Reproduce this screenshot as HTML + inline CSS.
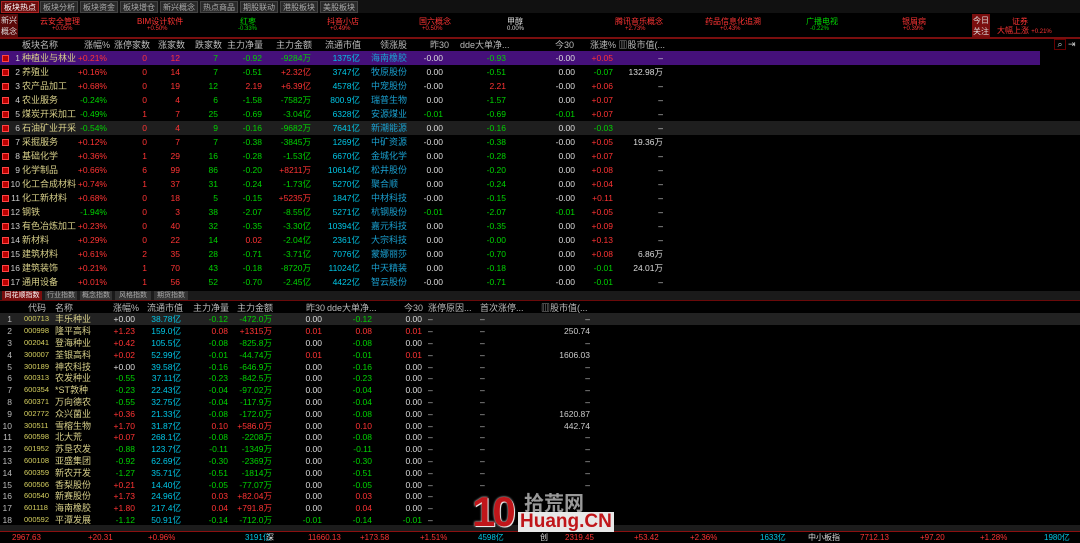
<!DOCTYPE html><html><head><meta charset="utf-8"><style>
*{margin:0;padding:0;box-sizing:border-box}
body{width:1080px;height:543px;background:#000;overflow:hidden;position:relative;font-family:"Liberation Sans","Noto Sans CJK SC",sans-serif;font-size:10px;color:#ccc}
.a{position:absolute;white-space:nowrap}
.tab{position:absolute;top:1px;height:12px;width:38px;background:#2a2a2a;color:#aaa;font-size:8px;text-align:center;line-height:12px;border:1px solid #444}
.r{position:absolute;left:0;width:1080px;height:14px;line-height:14px;font-size:8.5px}
.r span,.s span{position:absolute;text-align:right;white-space:nowrap}
.s{position:absolute;left:0;width:1080px;height:12px;line-height:12px;font-size:8.5px}
.R{color:#ff3434}.G{color:#00d400}.W{color:#ddd}.C{color:#00c8e8}.B{color:#1aa0d0}.Y{color:#d8d08a}.YY{color:#d6d060}
.u1{right:973px}.u2{right:933px}.u3{right:900px}.u4{right:862px}.u5{right:818px}.u6{right:769px}.u7{right:720px}.u9{right:637px}.u10{right:574px}.u11{right:505px}.u12{right:467px}.u13{right:417px}
.r .n{left:8px;color:#ccc;font-size:8.5px;width:12px;text-align:right}
.r .nm{left:22px;text-align:left;font-size:9px;color:#d8d08a}
.r .ld{left:371px;text-align:left;font-size:9px;color:#1aa0d0}
.r .ic{left:2px;top:4px;width:7px;height:7px;background:#b00;border:1px solid #f44}
.l1{right:945px}.l2{right:899px}.l3{right:852px}.l4{right:808px}.l5{right:758px}.l6{right:708px}.l7{right:658px}.l10{right:490px}
.s .n{left:0;width:12px;color:#bbb}
.s .cd{left:24px;text-align:left;color:#d6d060;font-size:7.5px}
.s .nm{left:55px;text-align:left;font-size:9px;color:#d8d08a}
.s .d1{left:428px;text-align:left}.s .d2{left:480px;text-align:left}
.h{position:absolute;color:#bbb;font-size:9px;white-space:nowrap;line-height:12px}
</style></head><body>
<div class="a" style="left:0;top:0;width:1080px;height:13px;background:#111"></div>
<div class="tab" style="left:1px;background:#6a0c0c;color:#fff;border-color:#a22">板块热点</div>
<div class="tab" style="left:40px">板块分析</div>
<div class="tab" style="left:80px">板块资金</div>
<div class="tab" style="left:120px">板块增仓</div>
<div class="tab" style="left:160px">新兴概念</div>
<div class="tab" style="left:200px">热点商品</div>
<div class="tab" style="left:240px">期股联动</div>
<div class="tab" style="left:280px">港股板块</div>
<div class="tab" style="left:320px">美股板块</div>
<div class="a" style="left:0;top:14px;width:18px;height:24px;background:#5a0a0a;color:#ddd;font-size:8px;line-height:11px;text-align:center;padding-top:1px">新兴<br>概念</div>
<div class="a" style="left:0;top:37px;width:1080px;height:2px;background:#7a0e0e"></div>
<div class="a R" style="left:40px;top:16px;font-size:8px">云安全管理</div><div class="a R" style="left:52px;top:26px;font-size:6px">+0.05%</div>
<div class="a R" style="left:137px;top:16px;font-size:8px">BIM设计软件</div><div class="a R" style="left:147px;top:26px;font-size:6px">+0.50%</div>
<div class="a G" style="left:240px;top:16px;font-size:8px">红枣</div><div class="a G" style="left:238px;top:26px;font-size:6px">-0.33%</div>
<div class="a R" style="left:327px;top:16px;font-size:8px">抖音小店</div><div class="a R" style="left:330px;top:26px;font-size:6px">+0.49%</div>
<div class="a R" style="left:419px;top:16px;font-size:8px">国六概念</div><div class="a R" style="left:422px;top:26px;font-size:6px">+0.50%</div>
<div class="a W" style="left:507px;top:16px;font-size:8px">甲醇</div><div class="a W" style="left:507px;top:26px;font-size:6px">0.00%</div>
<div class="a R" style="left:615px;top:16px;font-size:8px">腾讯音乐概念</div><div class="a R" style="left:625px;top:26px;font-size:6px">+2.73%</div>
<div class="a R" style="left:705px;top:16px;font-size:8px">药品信息化追溯</div><div class="a R" style="left:720px;top:26px;font-size:6px">+0.43%</div>
<div class="a G" style="left:806px;top:16px;font-size:8px">广播电视</div><div class="a G" style="left:810px;top:26px;font-size:6px">-0.22%</div>
<div class="a R" style="left:902px;top:16px;font-size:8px">银屑病</div><div class="a R" style="left:903px;top:26px;font-size:6px">+0.39%</div>
<div class="a" style="left:972px;top:14px;width:18px;height:24px;background:#7a0e0e;color:#ddd;font-size:8px;line-height:11px;text-align:center;padding-top:1px">今日<br>关注</div>
<div class="a R" style="left:1012px;top:16px;font-size:8px">证券</div>
<div class="a R" style="left:997px;top:25px;font-size:8px">大幅上涨 <span style="font-size:6px">+0.21%</span></div>

<div class="h" style="left:22px;top:39px">板块名称</div>
<div class="h" style="left:84px;top:39px">涨幅%</div>
<div class="h" style="left:114px;top:39px">涨停家数</div>
<div class="h" style="left:158px;top:39px">涨家数</div>
<div class="h" style="left:195px;top:39px">跌家数</div>
<div class="h" style="left:227px;top:39px">主力净量</div>
<div class="h" style="left:276px;top:39px">主力金额</div>
<div class="h" style="left:325px;top:39px">流通市值</div>
<div class="h" style="left:380px;top:39px">领涨股</div>
<div class="h" style="left:430px;top:39px">昨30</div>
<div class="h" style="left:460px;top:39px">dde大单净...</div>
<div class="h" style="left:555px;top:39px">今30</div>
<div class="h" style="left:590px;top:39px">涨速% ▥股市值(...</div>
<div class="a" style="left:1054px;top:39px;width:12px;height:11px;border:1px solid #600;color:#ccc;font-size:9px;line-height:9px;text-align:center">⌕</div>
<div class="a" style="left:1068px;top:39px;color:#ccc;font-size:9px">⇥</div>

<div class="a" style="left:0;top:51px;width:1040px;height:14px;background:#45107a"></div>
<div class="a" style="left:0;top:121px;width:1080px;height:14px;background:#1e1e1e"></div>

<div class="r" style="top:51px"><i class="a ic"></i><span class="n">1</span><span class="nm">种植业与林业</span><span class="u1 R">+0.21%</span><span class="u2 R">0</span><span class="u3 R">12</span><span class="u4 G">7</span><span class="u5 G">-0.92</span><span class="u6 G">-9284万</span><span class="u7 C">1375亿</span><span class="ld">海南橡胶</span><span class="u9 W">-0.00</span><span class="u10 G">-0.93</span><span class="u11 W">-0.00</span><span class="u12 R">+0.05</span><span class="u13 W">–</span></div>
<div class="r" style="top:65px"><i class="a ic"></i><span class="n">2</span><span class="nm">养殖业</span><span class="u1 R">+0.16%</span><span class="u2 R">0</span><span class="u3 R">14</span><span class="u4 G">7</span><span class="u5 G">-0.51</span><span class="u6 R">+2.32亿</span><span class="u7 C">3747亿</span><span class="ld">牧原股份</span><span class="u9 W">0.00</span><span class="u10 G">-0.51</span><span class="u11 W">0.00</span><span class="u12 G">-0.07</span><span class="u13 W">132.98万</span></div>
<div class="r" style="top:79px"><i class="a ic"></i><span class="n">3</span><span class="nm">农产品加工</span><span class="u1 R">+0.68%</span><span class="u2 R">0</span><span class="u3 R">19</span><span class="u4 G">12</span><span class="u5 R">2.19</span><span class="u6 R">+6.39亿</span><span class="u7 C">4578亿</span><span class="ld">中宠股份</span><span class="u9 W">-0.00</span><span class="u10 R">2.21</span><span class="u11 W">-0.00</span><span class="u12 R">+0.06</span><span class="u13 W">–</span></div>
<div class="r" style="top:93px"><i class="a ic"></i><span class="n">4</span><span class="nm">农业服务</span><span class="u1 G">-0.24%</span><span class="u2 R">0</span><span class="u3 R">4</span><span class="u4 G">6</span><span class="u5 G">-1.58</span><span class="u6 G">-7582万</span><span class="u7 C">800.9亿</span><span class="ld">瑞普生物</span><span class="u9 W">0.00</span><span class="u10 G">-1.57</span><span class="u11 W">0.00</span><span class="u12 R">+0.07</span><span class="u13 W">–</span></div>
<div class="r" style="top:107px"><i class="a ic"></i><span class="n">5</span><span class="nm">煤炭开采加工</span><span class="u1 G">-0.49%</span><span class="u2 R">1</span><span class="u3 R">7</span><span class="u4 G">25</span><span class="u5 G">-0.69</span><span class="u6 G">-3.04亿</span><span class="u7 C">6328亿</span><span class="ld">安源煤业</span><span class="u9 G">-0.01</span><span class="u10 G">-0.69</span><span class="u11 G">-0.01</span><span class="u12 R">+0.07</span><span class="u13 W">–</span></div>
<div class="r" style="top:121px"><i class="a ic"></i><span class="n">6</span><span class="nm">石油矿业开采</span><span class="u1 G">-0.54%</span><span class="u2 R">0</span><span class="u3 R">4</span><span class="u4 G">9</span><span class="u5 G">-0.16</span><span class="u6 G">-9682万</span><span class="u7 C">7641亿</span><span class="ld">新潮能源</span><span class="u9 W">0.00</span><span class="u10 G">-0.16</span><span class="u11 W">0.00</span><span class="u12 G">-0.03</span><span class="u13 W">–</span></div>
<div class="r" style="top:135px"><i class="a ic"></i><span class="n">7</span><span class="nm">采掘服务</span><span class="u1 R">+0.12%</span><span class="u2 R">0</span><span class="u3 R">7</span><span class="u4 G">7</span><span class="u5 G">-0.38</span><span class="u6 G">-3845万</span><span class="u7 C">1269亿</span><span class="ld">中矿资源</span><span class="u9 W">-0.00</span><span class="u10 G">-0.38</span><span class="u11 W">-0.00</span><span class="u12 R">+0.05</span><span class="u13 W">19.36万</span></div>
<div class="r" style="top:149px"><i class="a ic"></i><span class="n">8</span><span class="nm">基础化学</span><span class="u1 R">+0.36%</span><span class="u2 R">1</span><span class="u3 R">29</span><span class="u4 G">16</span><span class="u5 G">-0.28</span><span class="u6 G">-1.53亿</span><span class="u7 C">6670亿</span><span class="ld">金城化学</span><span class="u9 W">0.00</span><span class="u10 G">-0.28</span><span class="u11 W">0.00</span><span class="u12 R">+0.07</span><span class="u13 W">–</span></div>
<div class="r" style="top:163px"><i class="a ic"></i><span class="n">9</span><span class="nm">化学制品</span><span class="u1 R">+0.66%</span><span class="u2 R">6</span><span class="u3 R">99</span><span class="u4 G">86</span><span class="u5 G">-0.20</span><span class="u6 R">+8211万</span><span class="u7 C">10614亿</span><span class="ld">松井股份</span><span class="u9 W">0.00</span><span class="u10 G">-0.20</span><span class="u11 W">0.00</span><span class="u12 R">+0.08</span><span class="u13 W">–</span></div>
<div class="r" style="top:177px"><i class="a ic"></i><span class="n">10</span><span class="nm">化工合成材料</span><span class="u1 R">+0.74%</span><span class="u2 R">1</span><span class="u3 R">37</span><span class="u4 G">31</span><span class="u5 G">-0.24</span><span class="u6 G">-1.73亿</span><span class="u7 C">5270亿</span><span class="ld">聚合顺</span><span class="u9 W">0.00</span><span class="u10 G">-0.24</span><span class="u11 W">0.00</span><span class="u12 R">+0.04</span><span class="u13 W">–</span></div>
<div class="r" style="top:191px"><i class="a ic"></i><span class="n">11</span><span class="nm">化工新材料</span><span class="u1 R">+0.68%</span><span class="u2 R">0</span><span class="u3 R">18</span><span class="u4 G">5</span><span class="u5 G">-0.15</span><span class="u6 R">+5235万</span><span class="u7 C">1847亿</span><span class="ld">中材科技</span><span class="u9 W">-0.00</span><span class="u10 G">-0.15</span><span class="u11 W">-0.00</span><span class="u12 R">+0.11</span><span class="u13 W">–</span></div>
<div class="r" style="top:205px"><i class="a ic"></i><span class="n">12</span><span class="nm">钢铁</span><span class="u1 G">-1.94%</span><span class="u2 R">0</span><span class="u3 R">3</span><span class="u4 G">38</span><span class="u5 G">-2.07</span><span class="u6 G">-8.55亿</span><span class="u7 C">5271亿</span><span class="ld">杭钢股份</span><span class="u9 G">-0.01</span><span class="u10 G">-2.07</span><span class="u11 G">-0.01</span><span class="u12 R">+0.05</span><span class="u13 W">–</span></div>
<div class="r" style="top:219px"><i class="a ic"></i><span class="n">13</span><span class="nm">有色冶炼加工</span><span class="u1 R">+0.23%</span><span class="u2 R">0</span><span class="u3 R">40</span><span class="u4 G">32</span><span class="u5 G">-0.35</span><span class="u6 G">-3.30亿</span><span class="u7 C">10394亿</span><span class="ld">嘉元科技</span><span class="u9 W">0.00</span><span class="u10 G">-0.35</span><span class="u11 W">0.00</span><span class="u12 R">+0.09</span><span class="u13 W">–</span></div>
<div class="r" style="top:233px"><i class="a ic"></i><span class="n">14</span><span class="nm">新材料</span><span class="u1 R">+0.29%</span><span class="u2 R">0</span><span class="u3 R">22</span><span class="u4 G">14</span><span class="u5 R">0.02</span><span class="u6 G">-2.04亿</span><span class="u7 C">2361亿</span><span class="ld">大宗科技</span><span class="u9 W">0.00</span><span class="u10 G">-0.00</span><span class="u11 W">0.00</span><span class="u12 R">+0.13</span><span class="u13 W">–</span></div>
<div class="r" style="top:247px"><i class="a ic"></i><span class="n">15</span><span class="nm">建筑材料</span><span class="u1 R">+0.61%</span><span class="u2 R">2</span><span class="u3 R">35</span><span class="u4 G">28</span><span class="u5 G">-0.71</span><span class="u6 G">-3.71亿</span><span class="u7 C">7076亿</span><span class="ld">蒙娜丽莎</span><span class="u9 W">0.00</span><span class="u10 G">-0.70</span><span class="u11 W">0.00</span><span class="u12 R">+0.08</span><span class="u13 W">6.86万</span></div>
<div class="r" style="top:261px"><i class="a ic"></i><span class="n">16</span><span class="nm">建筑装饰</span><span class="u1 R">+0.21%</span><span class="u2 R">1</span><span class="u3 R">70</span><span class="u4 G">43</span><span class="u5 G">-0.18</span><span class="u6 G">-8720万</span><span class="u7 C">11024亿</span><span class="ld">中天精装</span><span class="u9 W">0.00</span><span class="u10 G">-0.18</span><span class="u11 W">0.00</span><span class="u12 G">-0.01</span><span class="u13 W">24.01万</span></div>
<div class="r" style="top:275px"><i class="a ic"></i><span class="n">17</span><span class="nm">通用设备</span><span class="u1 R">+0.01%</span><span class="u2 R">1</span><span class="u3 R">56</span><span class="u4 G">52</span><span class="u5 G">-0.70</span><span class="u6 G">-2.45亿</span><span class="u7 C">4422亿</span><span class="ld">智云股份</span><span class="u9 W">-0.00</span><span class="u10 G">-0.71</span><span class="u11 W">-0.00</span><span class="u12 G">-0.01</span><span class="u13 W">–</span></div>

<div class="a" style="left:0;top:291px;width:1080px;height:10px;background:#1a1a1a"></div>
<div class="a" style="left:0;top:300px;width:1080px;height:1px;background:#6a0a0a"></div>
<div class="a" style="left:2px;top:291px;width:40px;height:9px;background:#7a0e0e;color:#fff;font-size:7px;line-height:9px;text-align:center">同花顺指数</div>
<div class="a" style="left:45px;top:291px;width:32px;height:9px;background:#333;color:#aaa;font-size:7px;line-height:9px;text-align:center">行业指数</div>
<div class="a" style="left:80px;top:291px;width:32px;height:9px;background:#333;color:#aaa;font-size:7px;line-height:9px;text-align:center">概念指数</div>
<div class="a" style="left:115px;top:291px;width:36px;height:9px;background:#333;color:#aaa;font-size:7px;line-height:9px;text-align:center">风格指数</div>
<div class="a" style="left:154px;top:291px;width:34px;height:9px;background:#333;color:#aaa;font-size:7px;line-height:9px;text-align:center">期货指数</div>

<div class="h" style="left:28px;top:302px">代码</div>
<div class="h" style="left:55px;top:302px">名称</div>
<div class="h" style="left:113px;top:302px">涨幅%</div>
<div class="h" style="left:147px;top:302px">流通市值</div>
<div class="h" style="left:193px;top:302px">主力净量</div>
<div class="h" style="left:237px;top:302px">主力金额</div>
<div class="h" style="left:306px;top:302px">昨30</div>
<div class="h" style="left:327px;top:302px">dde大单净...</div>
<div class="h" style="left:404px;top:302px">今30</div>
<div class="h" style="left:428px;top:302px">涨停原因...</div>
<div class="h" style="left:480px;top:302px">首次涨停...</div>
<div class="h" style="left:541px;top:302px">▥股市值(...</div>
<div class="a" style="left:0;top:313px;width:1080px;height:12px;background:#222"></div>

<div class="s" style="top:313px"><span class="n">1</span><span class="cd">000713</span><span class="nm">丰乐种业</span><span class="l1 W">+0.00</span><span class="l2 C">38.78亿</span><span class="l3 G">-0.12</span><span class="l4 G">-472.0万</span><span class="l5 W">0.00</span><span class="l6 G">-0.12</span><span class="l7 W">0.00</span><span class="d1">–</span><span class="d2">–</span><span class="l10">–</span></div>
<div class="s" style="top:325px"><span class="n">2</span><span class="cd">000998</span><span class="nm">隆平高科</span><span class="l1 R">+1.23</span><span class="l2 C">159.0亿</span><span class="l3 R">0.08</span><span class="l4 R">+1315万</span><span class="l5 R">0.01</span><span class="l6 R">0.08</span><span class="l7 R">0.01</span><span class="d1">–</span><span class="d2">–</span><span class="l10">250.74</span></div>
<div class="s" style="top:337px"><span class="n">3</span><span class="cd">002041</span><span class="nm">登海种业</span><span class="l1 R">+0.42</span><span class="l2 C">105.5亿</span><span class="l3 G">-0.08</span><span class="l4 G">-825.8万</span><span class="l5 W">0.00</span><span class="l6 G">-0.08</span><span class="l7 W">0.00</span><span class="d1">–</span><span class="d2">–</span><span class="l10">–</span></div>
<div class="s" style="top:349px"><span class="n">4</span><span class="cd">300007</span><span class="nm">荃银高科</span><span class="l1 R">+0.02</span><span class="l2 C">52.99亿</span><span class="l3 G">-0.01</span><span class="l4 G">-44.74万</span><span class="l5 R">0.01</span><span class="l6 G">-0.01</span><span class="l7 R">0.01</span><span class="d1">–</span><span class="d2">–</span><span class="l10">1606.03</span></div>
<div class="s" style="top:361px"><span class="n">5</span><span class="cd">300189</span><span class="nm">神农科技</span><span class="l1 W">+0.00</span><span class="l2 C">39.58亿</span><span class="l3 G">-0.16</span><span class="l4 G">-646.9万</span><span class="l5 W">0.00</span><span class="l6 G">-0.16</span><span class="l7 W">0.00</span><span class="d1">–</span><span class="d2">–</span><span class="l10">–</span></div>
<div class="s" style="top:372px"><span class="n">6</span><span class="cd">600313</span><span class="nm">农发种业</span><span class="l1 G">-0.55</span><span class="l2 C">37.11亿</span><span class="l3 G">-0.23</span><span class="l4 G">-842.5万</span><span class="l5 W">0.00</span><span class="l6 G">-0.23</span><span class="l7 W">0.00</span><span class="d1">–</span><span class="d2">–</span><span class="l10">–</span></div>
<div class="s" style="top:384px"><span class="n">7</span><span class="cd">600354</span><span class="nm">*ST敦种</span><span class="l1 G">-0.23</span><span class="l2 C">22.43亿</span><span class="l3 G">-0.04</span><span class="l4 G">-97.02万</span><span class="l5 W">0.00</span><span class="l6 G">-0.04</span><span class="l7 W">0.00</span><span class="d1">–</span><span class="d2">–</span><span class="l10">–</span></div>
<div class="s" style="top:396px"><span class="n">8</span><span class="cd">600371</span><span class="nm">万向德农</span><span class="l1 G">-0.55</span><span class="l2 C">32.75亿</span><span class="l3 G">-0.04</span><span class="l4 G">-117.9万</span><span class="l5 W">0.00</span><span class="l6 G">-0.04</span><span class="l7 W">0.00</span><span class="d1">–</span><span class="d2">–</span><span class="l10">–</span></div>
<div class="s" style="top:408px"><span class="n">9</span><span class="cd">002772</span><span class="nm">众兴菌业</span><span class="l1 R">+0.36</span><span class="l2 C">21.33亿</span><span class="l3 G">-0.08</span><span class="l4 G">-172.0万</span><span class="l5 W">0.00</span><span class="l6 G">-0.08</span><span class="l7 W">0.00</span><span class="d1">–</span><span class="d2">–</span><span class="l10">1620.87</span></div>
<div class="s" style="top:420px"><span class="n">10</span><span class="cd">300511</span><span class="nm">雪榕生物</span><span class="l1 R">+1.70</span><span class="l2 C">31.87亿</span><span class="l3 R">0.10</span><span class="l4 R">+586.0万</span><span class="l5 W">0.00</span><span class="l6 R">0.10</span><span class="l7 W">0.00</span><span class="d1">–</span><span class="d2">–</span><span class="l10">442.74</span></div>
<div class="s" style="top:431px"><span class="n">11</span><span class="cd">600598</span><span class="nm">北大荒</span><span class="l1 R">+0.07</span><span class="l2 C">268.1亿</span><span class="l3 G">-0.08</span><span class="l4 G">-2208万</span><span class="l5 W">0.00</span><span class="l6 G">-0.08</span><span class="l7 W">0.00</span><span class="d1">–</span><span class="d2">–</span><span class="l10">–</span></div>
<div class="s" style="top:443px"><span class="n">12</span><span class="cd">601952</span><span class="nm">苏垦农发</span><span class="l1 G">-0.88</span><span class="l2 C">123.7亿</span><span class="l3 G">-0.11</span><span class="l4 G">-1349万</span><span class="l5 W">0.00</span><span class="l6 G">-0.11</span><span class="l7 W">0.00</span><span class="d1">–</span><span class="d2">–</span><span class="l10">–</span></div>
<div class="s" style="top:455px"><span class="n">13</span><span class="cd">600108</span><span class="nm">亚盛集团</span><span class="l1 G">-0.92</span><span class="l2 C">62.69亿</span><span class="l3 G">-0.30</span><span class="l4 G">-2369万</span><span class="l5 W">0.00</span><span class="l6 G">-0.30</span><span class="l7 W">0.00</span><span class="d1">–</span><span class="d2">–</span><span class="l10">–</span></div>
<div class="s" style="top:467px"><span class="n">14</span><span class="cd">600359</span><span class="nm">新农开发</span><span class="l1 G">-1.27</span><span class="l2 C">35.71亿</span><span class="l3 G">-0.51</span><span class="l4 G">-1814万</span><span class="l5 W">0.00</span><span class="l6 G">-0.51</span><span class="l7 W">0.00</span><span class="d1">–</span><span class="d2">–</span><span class="l10">–</span></div>
<div class="s" style="top:479px"><span class="n">15</span><span class="cd">600506</span><span class="nm">香梨股份</span><span class="l1 R">+0.21</span><span class="l2 C">14.40亿</span><span class="l3 G">-0.05</span><span class="l4 G">-77.07万</span><span class="l5 W">0.00</span><span class="l6 G">-0.05</span><span class="l7 W">0.00</span><span class="d1">–</span><span class="d2">–</span><span class="l10">–</span></div>
<div class="s" style="top:490px"><span class="n">16</span><span class="cd">600540</span><span class="nm">新赛股份</span><span class="l1 R">+1.73</span><span class="l2 C">24.96亿</span><span class="l3 R">0.03</span><span class="l4 R">+82.04万</span><span class="l5 W">0.00</span><span class="l6 R">0.03</span><span class="l7 W">0.00</span><span class="d1">–</span></div>
<div class="s" style="top:502px"><span class="n">17</span><span class="cd">601118</span><span class="nm">海南橡胶</span><span class="l1 R">+1.80</span><span class="l2 C">217.4亿</span><span class="l3 R">0.04</span><span class="l4 R">+791.8万</span><span class="l5 W">0.00</span><span class="l6 R">0.04</span><span class="l7 W">0.00</span><span class="d1">–</span></div>
<div class="s" style="top:514px"><span class="n">18</span><span class="cd">000592</span><span class="nm">平潭发展</span><span class="l1 G">-1.12</span><span class="l2 C">50.91亿</span><span class="l3 G">-0.14</span><span class="l4 G">-712.0万</span><span class="l5 G">-0.01</span><span class="l6 G">-0.14</span><span class="l7 G">-0.01</span><span class="d1">–</span></div>

<div class="a" style="left:0;top:525px;width:1080px;height:6px;background:#1c1c1c"></div>
<div class="a" style="left:0;top:531px;width:1080px;height:1px;background:#8a1010"></div>
<div class="a" style="left:0;top:532px;width:1080px;height:11px;font-size:8px;line-height:11px">
<span class="a R" style="left:12px">2967.63</span><span class="a R" style="left:88px">+20.31</span><span class="a R" style="left:148px">+0.96%</span><span class="a C" style="left:245px">3191亿</span><span class="a W" style="left:266px">深</span><span class="a R" style="left:308px">11660.13</span><span class="a R" style="left:360px">+173.58</span><span class="a R" style="left:420px">+1.51%</span><span class="a C" style="left:478px">4598亿</span><span class="a W" style="left:540px">创</span><span class="a R" style="left:565px">2319.45</span><span class="a R" style="left:634px">+53.42</span><span class="a R" style="left:690px">+2.36%</span><span class="a C" style="left:760px">1633亿</span><span class="a W" style="left:808px">中小板指</span><span class="a R" style="left:860px">7712.13</span><span class="a R" style="left:920px">+97.20</span><span class="a R" style="left:980px">+1.28%</span><span class="a C" style="left:1044px">1980亿</span>
</div>
<div class="a" style="left:472px;top:490px;font-size:42px;font-weight:bold;color:#c0161a;line-height:44px;letter-spacing:-3px;text-shadow:0 0 2px #fff,1px 1px 0 #ddd">10</div>
<div class="a" style="left:524px;top:491px;font-size:20px;color:#999;line-height:22px;font-family:'Noto Sans CJK SC',sans-serif;font-weight:bold">拾荒网</div>
<div class="a" style="left:518px;top:512px;font-size:19px;color:#c0161a;line-height:20px;font-weight:bold;background:#e8e8e8;padding:0 2px">Huang.CN</div>
</body></html>
